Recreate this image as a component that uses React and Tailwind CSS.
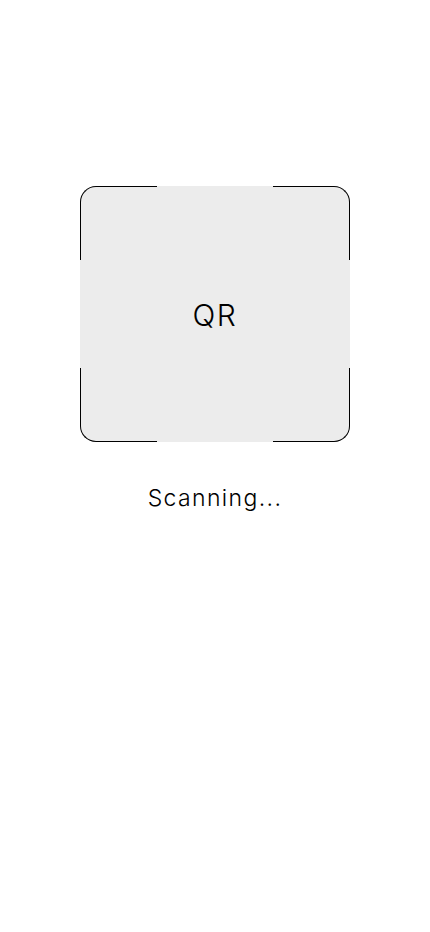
import React from 'react'

export default function App() {
  return (
    <div className="w-[430px] h-[932px] bg-white flex flex-col items-center pt-[186px] font-['Inter',sans-serif] text-black font-light">
      {/* Scan frame */}
      <div className="relative w-[270px] h-[256px] rounded-2xl bg-[#ececec] flex items-center justify-center">
        <span className="text-[30px] leading-none tracking-[0.05em] pt-[2px]">QR</span>

        {/* Corner brackets */}
        <div className="absolute left-0 top-0 w-[77px] h-[74px] border-t border-l border-black rounded-tl-2xl" />
        <div className="absolute right-0 top-0 w-[77px] h-[74px] border-t border-r border-black rounded-tr-2xl" />
        <div className="absolute left-0 bottom-0 w-[77px] h-[74px] border-b border-l border-black rounded-bl-2xl" />
        <div className="absolute right-0 bottom-0 w-[77px] h-[74px] border-b border-r border-black rounded-br-2xl" />
      </div>

      {/* Status */}
      <p className="mt-[42px] text-[23px] leading-[28px] tracking-[0.06em]">Scanning...</p>
    </div>
  )
}
